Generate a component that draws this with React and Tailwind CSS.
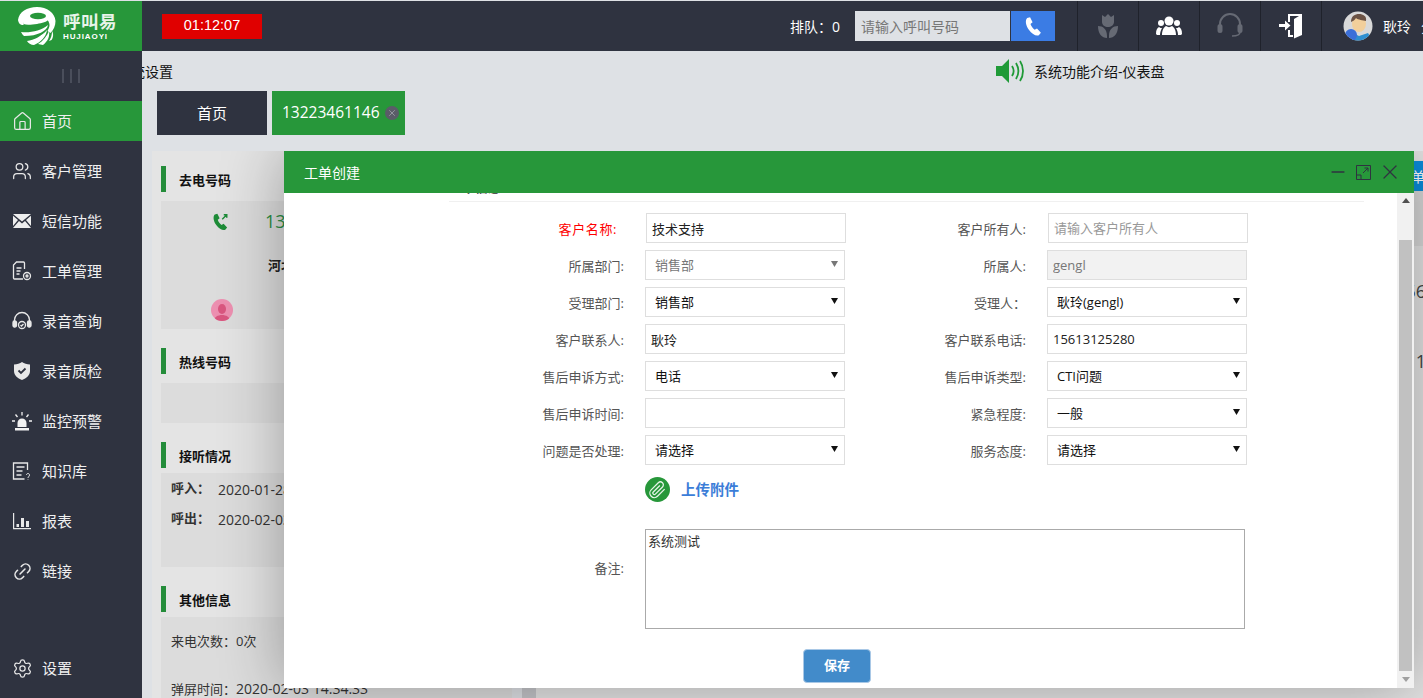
import React from 'react'
import { House, Users, Link2, Settings, Minus, X } from 'lucide-react'

function Caret({ muted }) {
  return (
    <svg className="absolute right-[7px] top-[11px] pointer-events-none" width="7" height="6" viewBox="0 0 7 6">
      <path d="M0 0h7L3.500 6z" fill={muted ? '#777' : '#111'} />
    </svg>
  )
}

function Field({ type, value, placeholder, disabled, className = '' }) {
  if (type === 'select') {
    return (
      <div className={`relative w-[200px] h-[30px] ${className}`}>
        <select
          disabled={disabled}
          defaultValue={value}
          className={`appearance-none w-full h-full border border-[#dedede] bg-white pl-[9px] pt-[2px] text-[13px] outline-none ${disabled ? 'text-[#777]' : 'text-[#111]'}`}
        >
          <option>{value}</option>
        </select>
        <Caret muted={disabled} />
      </div>
    )
  }
  return (
    <input
      readOnly
      defaultValue={value}
      placeholder={placeholder}
      className={`w-[200px] h-[30px] border border-[#dedede] px-[5px] text-[13px] text-[#222] placeholder:text-[#999] outline-none ${disabled ? 'bg-[#f2f2f2] text-[#777]' : 'bg-white'} ${className}`}
    />
  )
}

const rows = [
  [
    { label: '客户名称:', red: true, value: '技术支持', shift: true },
    { label: '客户所有人:', placeholder: '请输入客户所有人', shift: true },
  ],
  [
    { label: '所属部门:', type: 'select', value: '销售部', disabled: true },
    { label: '所属人:', value: 'gengl', disabled: true },
  ],
  [
    { label: '受理部门:', type: 'select', value: '销售部' },
    { label: '受理人：', type: 'select', value: '耿玲(gengl)' },
  ],
  [
    { label: '客户联系人:', value: '耿玲' },
    { label: '客户联系电话:', value: '15613125280' },
  ],
  [
    { label: '售后申诉方式:', type: 'select', value: '电话' },
    { label: '售后申诉类型:', type: 'select', value: 'CTI问题' },
  ],
  [
    { label: '售后申诉时间:', value: '' },
    { label: '紧急程度:', type: 'select', value: '一般' },
  ],
  [
    { label: '问题是否处理:', type: 'select', value: '请选择' },
    { label: '服务态度:', type: 'select', value: '请选择' },
  ],
]

function Logo() {
  return (
    <div className="w-[142px] h-full bg-[#27973a] flex items-center pl-[17px] shrink-0">
      <svg width="40" height="40" viewBox="0 0 40 40">
        <path d="M1 14C2 6 10 1 20 1s18 6 18.500 14c0 5-2 9-5 12l-3-2c1-2 2-4 2-6 0-5-5-9-12.500-9S7 12 6.500 19C3 19 1.500 17 1 14z" fill="#fff" />
        <path d="M6.500 11C9 6 14 4 20 4s11 3 12 9c-2 3-7 4-12 5-5 .5-10 1.500-13.500 0z" fill="#fff" />
        <ellipse cx="21" cy="10" rx="8" ry="3.200" fill="#27973a" />
        <path d="M4 26c9 1 20-1 27-7-1 6-10 11-24 11-1-1-2-2-3-4zM10 35c7-1 15-5 20-11-1 7-6 12-13 15-3 0-6-2-7-4zM21 38c5-3 9-8 11-13 1 5-1 10-6 14zM32 35c2-3 3-6 3-10 2 3 1 7-.5 9z" fill="#fff" />
      </svg>
      <div className="ml-[6px] flex flex-col text-white leading-none">
        <span className="text-[17.500px] font-bold tracking-[0.5px] leading-[20px] text-[#e8f4ea]">呼叫易</span>
        <span className="text-[8px] font-bold tracking-[0.9px] leading-[9px] mt-[1px] font-['Liberation_Sans',sans-serif]">HUJIAOYI</span>
      </div>
    </div>
  )
}

function HeaderIcon({ children }) {
  return (
    <div className="w-[61px] h-full border-l border-[#1f222b] flex items-center justify-center">{children}</div>
  )
}

function Header() {
  return (
    <div className="h-[50px] bg-[#2f3340] flex items-center text-white shrink-0">
      <Logo />
      <div className="ml-[20px] w-[100px] h-[25px] bg-[#e00000] flex items-center justify-center text-[14.500px] font-['Liberation_Sans',sans-serif]">
        01:12:07
      </div>
      <div className="ml-auto flex items-center h-full">
        <span className="text-[14px] mr-[15px]">排队：0</span>
        <input
          readOnly
          placeholder="请输入呼叫号码"
          className="w-[155px] h-[30px] bg-[#dee1e5] px-[6px] text-[14px] placeholder:text-[#777] outline-none"
        />
        <div className="ml-px w-[44px] h-[30px] bg-[#3b7ce4] flex items-center justify-center">
          <svg width="20" height="22" viewBox="0 0 24 24">
            <path d="M5 2.500 8.500 1.500l3 6-2.500 2c.8 2.500 2.500 5 5 7l2.800-1.500 4.700 5-2.500 3c-3 1.500-8-1-12-6.500S2.500 5 5 2.500z" fill="#fff" />
          </svg>
        </div>
        <div className="ml-[22px] flex h-full">
          <HeaderIcon>
            <svg width="20" height="24" viewBox="0 0 20 24" fill="#666a74">
              <path d="M10 0l3 3 3-2v7c0 3-3 5-6 5S4 11 4 8V1l3 2zM0 12c5 0 9 3 9 10v2C4 24 0 20 0 12zM20 12c-5 0-9 3-9 10v2c5 0 9-4 9-12z" />
            </svg>
          </HeaderIcon>
          <HeaderIcon>
            <svg width="26" height="20" viewBox="0 0 26 20" fill="#fff">
              <circle cx="13" cy="5" r="4.500" />
              <circle cx="5" cy="7" r="3" />
              <circle cx="21" cy="7" r="3" />
              <path d="M6 19c0-5 2-8 4-9 2 1.500 4 1.500 6 0 2 1 4 4 4 9zM0 18c0-4 1-6 3-7 1 1 2 1 3 1-1 2-2 4-2 7H1zM26 18c0-4-1-6-3-7-1 1-2 1-3 1 1 2 2 4 2 7h3z" />
            </svg>
          </HeaderIcon>
          <HeaderIcon>
            <svg width="26" height="26" viewBox="0 0 26 26" fill="none" stroke="#666a74" strokeWidth="2">
              <path d="M3 15V11a10 10 0 0 1 20 0v4" />
              <rect x="1.500" y="12" width="3" height="7" rx="1.500" fill="#666a74" />
              <rect x="21.500" y="12" width="3" height="7" rx="1.500" fill="#666a74" />
              <path d="M23 19c0 3-3 4-8 4" strokeWidth="1.500" />
            </svg>
          </HeaderIcon>
          <HeaderIcon>
            <svg width="24" height="26" viewBox="0 0 24 26" fill="#fff">
              <path d="M9 1h14v21l-8 3.500V6l5-3H11v6H9zM9 17h2v5h3v2H9z" />
              <path d="M0 11h6V7.500l5.500 5-5.500 5V14H0z" />
            </svg>
          </HeaderIcon>
          <div className="w-[102px] h-full border-l border-[#1f222b] flex items-center pl-[21px] overflow-hidden">
            <svg width="30" height="30" viewBox="0 0 30 30" className="shrink-0">
              <clipPath id="avatarClip"><circle cx="15" cy="15" r="14.500" /></clipPath>
              <g clipPath="url(#avatarClip)">
                <rect width="30" height="30" fill="#d9d9d9" />
                <ellipse cx="16" cy="13" rx="7" ry="8" fill="#f2cf9b" />
                <path d="M8 11c0-6 4-8 8-8s8 2 7 7c-3-1-8-1-10-3-1 2-3 3-5 4z" fill="#6b5244" />
                <path d="M10 22l6 3 9-3 5 8H8z" fill="#2f8fd0" />
                <circle cx="8" cy="24" r="6" fill="#3b6fd8" />
              </g>
            </svg>
            <span className="ml-[10px] text-[14px] whitespace-nowrap">耿玲</span>
            <span className="ml-[10px] text-[14px]">分</span>
          </div>
        </div>
      </div>
    </div>
  )
}

function SolidMail() {
  return (
    <svg width="18" height="14" viewBox="0 0 18 14" fill="#eee">
      <path d="M0 0h18L9 7.500zM0 1.800l5 4.200L0 12zM18 1.800 13 6l5 6zM6 7l3 2.500L12 7l6 7H0z" />
    </svg>
  )
}

const C = { fill: 'none', stroke: '#e8e8e8', strokeWidth: 1.300 }
const menu = [
  { label: '首页', active: true, icon: <House size={21} strokeWidth={1.400} color="#e8e8e8" /> },
  { label: '客户管理', icon: <Users size={20} strokeWidth={1.500} color="#e8e8e8" /> },
  { label: '短信功能', icon: <SolidMail /> },
  {
    label: '工单管理',
    icon: (
      <svg width="20" height="20" viewBox="0 0 20 20" {...C}>
        <path d="M11 18H2.500a1 1 0 0 1-1-1V4l3-3h7a1 1 0 0 1 1 1v6M4.500 7h5M4.500 10h4M4.500 13h3" />
        <circle cx="15" cy="15" r="3.500" />
        <circle cx="15" cy="15" r="1" />
      </svg>
    ),
  },
  {
    label: '录音查询',
    icon: (
      <svg width="20" height="20" viewBox="0 0 20 20" {...C}>
        <path d="M2.500 11V9a7.500 7.500 0 0 1 15 0v2" />
        <rect x="1" y="10" width="3.500" height="6" rx="1.500" fill="#e8e8e8" />
        <rect x="15.500" y="10" width="3.500" height="6" rx="1.500" fill="#e8e8e8" />
        <circle cx="10" cy="14" r="3.500" />
        <path d="M8.500 14l1 1 2-2" />
      </svg>
    ),
  },
  {
    label: '录音质检',
    icon: (
      <svg width="18" height="20" viewBox="0 0 18 20">
        <path d="M9 1c2 1.500 5 2.500 8 2.500V10c0 4-3.500 7.500-8 9-4.500-1.500-8-5-8-9V3.500C4 3.500 7 2.500 9 1z" fill="#e8e8e8" />
        <path d="M5.500 9.500 8 12l4.500-4.500" fill="none" stroke="#2f3340" strokeWidth="1.800" />
      </svg>
    ),
  },
  {
    label: '监控预警',
    icon: (
      <svg width="20" height="20" viewBox="0 0 20 20" fill="#f2f2f2">
        <path d="M5.500 16v-4a4.500 4.500 0 0 1 9 0v4zM3 17h14v2.500H3z" />
        <path d="M10 1v3.500M3.500 3.500l2 2.500M16.500 3.500l-2 2.500M0 10h3M17 10h3" stroke="#f2f2f2" strokeWidth="1.300" />
      </svg>
    ),
  },
  {
    label: '知识库',
    icon: (
      <svg width="20" height="20" viewBox="0 0 20 20" {...C}>
        <path d="M15.500 9V2H1.500v16h11M4.500 6h8M4.500 10h6M4.500 14h5" />
        <path d="M14.500 14c0-2 3-2 3 0 0 1.500-1.500 1.500-1.500 3M16 18.500v.5" strokeWidth="1" />
      </svg>
    ),
  },
  {
    label: '报表',
    icon: (
      <svg width="18" height="18" viewBox="0 0 18 18" fill="#e8e8e8">
        <path d="M0 1h1.200v15H18v1.200H0zM3.500 12h2.500v3H3.500zM8 6h3v9H8zM13 9h3v6h-3z" />
      </svg>
    ),
  },
  { label: '链接', icon: <Link2 size={21} strokeWidth={1.800} color="#e8e8e8" className="-rotate-45" /> },
]

function MenuItem({ item }) {
  return (
    <div className={`flex items-center text-[15px] text-[#f0f0f0] ${item.active ? 'h-[40px] mb-[5px] bg-[#27973a]' : 'h-[50px]'}`}>
      <div className="w-[42px] flex justify-center pl-[2px]">{item.icon}</div>
      <span>{item.label}</span>
    </div>
  )
}

function Sidebar() {
  return (
    <div className="w-[142px] bg-[#2f3340] flex flex-col shrink-0">
      <div className="h-[50px] flex items-center justify-center gap-[6px]">
        <span className="w-[2px] h-[14px] bg-[#4a4e5b]" />
        <span className="w-[2px] h-[14px] bg-[#4a4e5b]" />
        <span className="w-[2px] h-[14px] bg-[#4a4e5b]" />
      </div>
      {menu.map((m) => (
        <MenuItem key={m.label} item={m} />
      ))}
      <div className="mt-auto mb-[5px]">
        <MenuItem item={{ label: '设置', icon: <Settings size={21} strokeWidth={1.400} color="#e8e8e8" /> }} />
      </div>
    </div>
  )
}

function SectionTitle({ children, gap }) {
  return (
    <div className={`flex items-center h-[26px] border-l-[5px] border-[#248c3a] pl-[13px] pt-[4px] text-[13px] font-bold text-[#111] ${gap}`}>
      {children}
    </div>
  )
}

function BackgroundPanels() {
  return (
    <div className="flex h-full pl-[10px]">
      <div className="w-[360px] bg-[#e4e4e4] pl-[9px] pt-[15px] text-[13px] text-[#333]">
        <SectionTitle gap="mb-[9px]">去电号码</SectionTitle>
        <div className="h-[128px] bg-[#dcdcdc]">
          <div className="flex items-center h-[40px] pl-[50px]">
            <svg width="18" height="19" viewBox="0 0 24 24">
              <path d="M5 2.500 8.500 1.500l3 6-2.500 2c.8 2.500 2.500 5 5 7l2.800-1.500 4.700 5-2.500 3c-3 1.500-8-1-12-6.500S2.500 5 5 2.500z" fill="#1e8c38" />
              <path d="M15 9l6-6M17 3h4v4" stroke="#1e8c38" strokeWidth="2" fill="none" />
            </svg>
            <span className="ml-[36px] text-[18px] text-[#2c8c44]">13223461146</span>
          </div>
          <div className="pl-[107px] mt-[15px] font-bold text-[#222]">河北省</div>
          <svg className="ml-[50px] mt-[23px]" width="22" height="22" viewBox="0 0 22 22">
            <clipPath id="pinkClip"><circle cx="11" cy="11" r="11" /></clipPath>
            <g clipPath="url(#pinkClip)">
              <rect width="22" height="22" fill="#ec8fb0" />
              <ellipse cx="11" cy="10" rx="4" ry="5" fill="#d9567f" />
              <path d="M3 22c0-4 4-6 8-6s8 2 8 6z" fill="#d9567f" />
            </g>
          </svg>
        </div>
        <SectionTitle gap="mt-[19px] mb-[9px]">热线号码</SectionTitle>
        <div className="h-[40px] bg-[#dcdcdc]" />
        <SectionTitle gap="mt-[19px] mb-[5px]">接听情况</SectionTitle>
        <div className="h-[94px] bg-[#dcdcdc] pl-[10px] pt-[1px]">
          <div className="h-[30px] flex items-center"><b className="font-semibold w-[47px]">呼入：</b><span className="text-[14px]">2020-01-28 10:21:12</span></div>
          <div className="h-[30px] flex items-center"><b className="font-semibold w-[47px]">呼出：</b><span className="text-[14px]">2020-02-03 14:34:33</span></div>
        </div>
        <SectionTitle gap="mt-[19px] mb-[5px]">其他信息</SectionTitle>
        <div className="h-[90px] bg-[#dcdcdc] pl-[10px] pt-[15px]">
          <div className="h-[20px]">来电次数：0次</div>
          <div className="h-[20px] mt-[26px] whitespace-nowrap">弹屏时间：<span className="text-[14px]">2020-02-03 14:34:33</span></div>
        </div>
      </div>
      <div className="w-[10px] shrink-0" />
      <div className="w-[14px] bg-[#c4c5c9] shrink-0" />
      <div className="flex-1 bg-[#e4e4e4] flex flex-col items-end overflow-hidden">
        <div className="w-[60px] h-[10px]" />
        <div className="h-[30px] w-[60px] bg-[#0a8ddb] text-white text-[14px] flex items-center justify-end -mr-[2px]">工单</div>
        <div className="h-[55px] w-full bg-[#d8d8d8]" />
        <div className="w-[30px] -mr-[3px] text-[18px] text-[#444] text-right mt-[32px]">56</div>
        <div className="w-[30px] -mr-[3px] text-[18px] text-[#444] text-right mt-[43px]">1</div>
      </div>
    </div>
  )
}

function WorkOrderModal() {
  return (
    <div className="absolute left-[142px] top-0 w-[1130px] h-[537px] bg-white flex flex-col shadow-[0_0_60px_rgba(0,0,0,0.32)]">
      <div className="h-[42px] bg-[#27973a] flex items-center pl-[20px] pr-[12px] text-white text-[14px] shrink-0">
        工单创建
        <div className="ml-auto flex items-center gap-[8px] text-[#2f3340]">
          <Minus size={20} strokeWidth={2} />
          <svg width="15" height="15" viewBox="0 0 15 15" fill="none" stroke="#2f3340" strokeWidth="1">
            <path d="M5 .5h9.500V14.500H5M.5 10V.5H5M.5 10h4.500v4.500H.5zM7 8l5-5M8.500 3H12v3.500" />
          </svg>
          <X size={24} strokeWidth={1.300} className="-ml-px" />
        </div>
      </div>
      <div className="flex-1 flex min-h-0">
        <div className="flex-1 min-w-0 overflow-hidden">
          <div className="ml-[165px] w-[915px] h-[9px] border-b border-[#f0f0f0] overflow-hidden text-[13px] font-bold text-[#555]">
            <div className="-mt-[15px] h-[20px]">工单信息</div>
          </div>
          <div className="pt-[11px]">
            {rows.map((row) => (
              <div key={row[0].label} className="flex items-center h-[30px] mb-[7px] text-[13px] text-[#555]">
                <div className={`w-[340px] text-right pt-[4px] ${row[0].red ? 'text-[#f00] pr-[7px] tracking-[0.6px]' : ''}`}>{row[0].label}</div>
                <Field {...row[0]} className={row[0].shift ? 'ml-[22px] -mr-px' : 'ml-[21px]'} />
                <div className="w-[181px] text-right pt-[4px]">{row[1].label}</div>
                <Field {...row[1]} className={row[1].shift ? 'ml-[22px]' : 'ml-[21px]'} />
              </div>
            ))}
          </div>
          <div className="flex items-center ml-[361px] mt-[12px] h-[25px]">
            <div className="w-[25px] h-[25px] rounded-full bg-[#27973a] flex items-center justify-center">
              <svg width="19" height="19" viewBox="0 0 24 24" fill="none" stroke="#e6f4e8" strokeWidth="1.600">
                <path d="M21 11.500 12 20.500a5.500 5.500 0 0 1-8-8L13 3.500a3.700 3.700 0 0 1 5.300 5.300l-9 9a1.800 1.800 0 0 1-2.600-2.600L15 7" />
              </svg>
            </div>
            <span className="ml-[11px] text-[14.500px] font-bold text-[#3b7dd8]">上传附件</span>
          </div>
          <div className="flex items-center mt-[27px] text-[13px] text-[#555]">
            <div className="w-[340px] text-right pb-[20px]">备注:</div>
            <textarea
              readOnly
              defaultValue="系统测试"
              className="ml-[21px] w-[600px] h-[100px] border border-[#aaaaaa] p-[2px] text-[13px] text-[#333] outline-none resize-none"
            />
          </div>
          <div className="ml-[519px] mt-[20px] w-[68px] h-[34px] rounded-[4px] bg-[#428bca] border border-[#a9c8e6] text-white text-[13px] font-semibold flex items-center justify-center">
            保存
          </div>
        </div>
        <div className="w-[17px] bg-[#f1f1f1] flex flex-col items-center shrink-0">
          <svg className="mt-[5px]" width="8" height="5" viewBox="0 0 8 5"><path d="M4 0l4 5H0z" fill="#505050" /></svg>
          <div className="w-[13px] h-[431px] bg-[#c1c1c1] mt-[37px]" />
          <svg className="mt-[6px]" width="8" height="5" viewBox="0 0 8 5"><path d="M0 0h8L4 5z" fill="#a0a0a0" /></svg>
        </div>
      </div>
    </div>
  )
}

function Main() {
  return (
    <div className="flex-1 min-w-0 bg-[#dee1e5] flex flex-col overflow-hidden font-normal">
      <div className="h-[40px] flex items-center text-[14px] text-[#111] shrink-0">
        <span className="-ml-[25px] w-[879px]">系统设置</span>
        <svg width="28" height="24" viewBox="0 0 28 24" fill="#1f9a37">
          <path d="M0 7h6l7-7v24l-7-7H0z" />
          <path d="M16 7c2 3 2 7 0 10M20 4c3 5 3 11 0 16M24 2c4 6 4 14 0 20" fill="none" stroke="#1f9a37" strokeWidth="1.800" />
        </svg>
        <span className="ml-[10px]">系统功能介绍-仪表盘</span>
      </div>
      <div className="h-[44px] flex gap-[5px] ml-[15px] mb-[16px] shrink-0 text-white">
        <div className="w-[110px] bg-[#2f3340] flex items-center justify-center text-[15px]">首页</div>
        <div className="w-[133px] bg-[#27973a] flex items-center pl-[10px] text-[15.500px]">
          13223461146
          <span className="ml-[5px] w-[14px] h-[14px] rounded-full bg-[#5a5c68] flex items-center justify-center">
            <X size={10} strokeWidth={1.500} color="#b5b7bd" />
          </span>
        </div>
      </div>
      <div className="flex-1 min-h-0 relative overflow-hidden">
        <BackgroundPanels />
        <WorkOrderModal />
      </div>
    </div>
  )
}

export default function App() {
  return (
    <div className="h-[698px] w-full overflow-hidden flex flex-col pt-px bg-[#dee1e5] font-['Open_Sans','Noto_Sans_CJK_SC',sans-serif]">
      <Header />
      <div className="flex-1 flex min-h-0">
        <Sidebar />
        <Main />
      </div>
    </div>
  )
}
